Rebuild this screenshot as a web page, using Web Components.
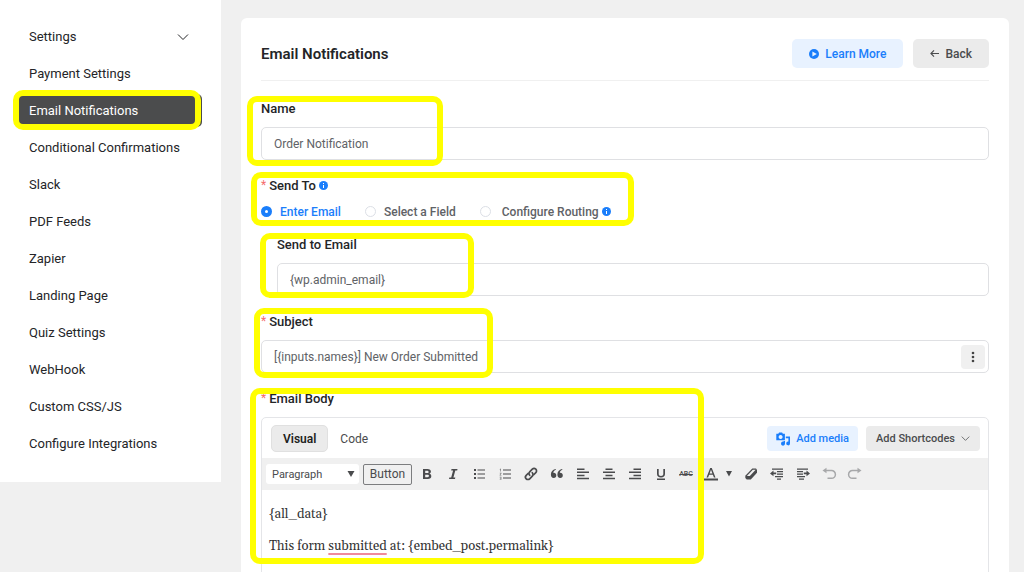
<!DOCTYPE html>
<html lang="en">
<head>
<meta charset="utf-8">
<meta name="viewport" content="width=device-width, initial-scale=1">
<title>Email Notifications</title>
<style>
    body {
        margin: 0;
        background-color: #f0f0f0;
        color: #242528;
        font-family: Roboto, "Liberation Sans", sans-serif;
        font-size: 12px;
    }
</style>
</head>
<body>
<settings-page>
    <side-nav slot="nav">
        <nav-item arrow>Settings</nav-item>
        <nav-item>Payment Settings</nav-item>
        <nav-item active>Email Notifications
            <highlight-ring slot="ring" style="top: -4px; left: -5px; width: 188px; height: 40px"></highlight-ring>
        </nav-item>
        <nav-item>Conditional Confirmations</nav-item>
        <nav-item>Slack</nav-item>
        <nav-item>PDF Feeds</nav-item>
        <nav-item>Zapier</nav-item>
        <nav-item>Landing Page</nav-item>
        <nav-item>Quiz Settings</nav-item>
        <nav-item>WebHook</nav-item>
        <nav-item>Custom CSS/JS</nav-item>
        <nav-item>Configure Integrations</nav-item>
    </side-nav>

    <panel-header>
        Email Notifications
        <action-button slot="actions" kind="primary" icon="play">Learn More</action-button>
        <action-button slot="actions" icon="back">Back</action-button>
    </panel-header>

    <text-field label="Name" value="Order Notification">
        <highlight-ring style="top: -3px; left: -14px; width: 196px; height: 70px"></highlight-ring>
    </text-field>
    <send-to-field>
        <highlight-ring style="top: -4px; left: -10px; width: 383px; height: 54px"></highlight-ring>
    </send-to-field>
    <text-field label="Send to Email" value="{wp.admin_email}" indent>
        <highlight-ring style="top: -2px; left: -17px; width: 214px; height: 65px"></highlight-ring>
    </text-field>
    <text-field label="Subject" value="[{inputs.names}] New Order Submitted" required menu>
        <highlight-ring style="top: -4px; left: -7px; width: 239px; height: 70px"></highlight-ring>
    </text-field>
    <body-editor>
        <p>{all_data}</p>
        <p>This form <u>submitted</u> at: {embed_post.permalink}</p>
        <highlight-ring slot="ring" style="top: -1px; left: -11px; width: 454px; height: 176px"></highlight-ring>
    </body-editor>
</settings-page>

<script>
const icons = {
    chevron: '<svg width="12" height="12" viewBox="0 0 12 12" fill="none" stroke="currentColor" stroke-width="1"><path d="M1 3.500l5 5 5-5"/></svg>',
    play: '<svg width="10" height="10" viewBox="0 0 10 10"><circle cx="5" cy="5" r="5" fill="currentColor"/><path d="M3.400 2.400v5.200L7.800 5z" fill="#e8f2ff"/></svg>',
    back: '<svg width="9" height="9" viewBox="0 0 9 9" fill="none" stroke="currentColor" stroke-width="1.100"><path d="M9 4.500H1M4 1.300L.9 4.500 4 7.700"/></svg>',
    info: '<svg width="9" height="9" viewBox="0 0 9 9"><circle cx="4.500" cy="4.500" r="4.500" fill="#1a7efb"/><path d="M4 3.900h1v3H4zM4 2h1v1H4z" fill="#fff"/></svg>',
    dots: '<svg width="4" height="12" viewBox="0 0 4 12" fill="#444"><circle cx="2" cy="2" r="1.300"/><circle cx="2" cy="6" r="1.300"/><circle cx="2" cy="10" r="1.300"/></svg>',
    media: '<svg width="14" height="14" viewBox="0 0 14 14" fill="currentColor"><path fill-rule="evenodd" d="M.3 1.800h2L3.100.5h3l.8 1.300h2v6.400H.3zM4.600 3a2 2 0 1 0 .01 0z"/><path d="M9.800 4.500H14v7a1.900 1.900 0 1 1-1.600-1.900V6.300H9.800z"/><path d="M7.500 9H9v2.500a2 2 0 1 1-1.500-1.800z"/></svg>'
};

// toolbar glyphs are drawn on a 16px grid
const glyph = (inner) => `<svg width="16" height="16" viewBox="0 0 16 16" fill="currentColor">${inner}</svg>`;
const tools = [
    ['Bold', glyph('<path fill-rule="evenodd" d="M4 3h4.500c2.200 0 3.400 1 3.400 2.600 0 1-.5 1.800-1.500 2.200 1.200.3 1.900 1.200 1.900 2.400C12.300 12 11 13 8.800 13H4zM6.200 4.700v2.400h1.900c1 0 1.500-.4 1.500-1.200S9.100 4.700 8 4.700zM6.200 8.800v2.500h2.200c1 0 1.600-.4 1.600-1.200 0-.9-.6-1.300-1.700-1.300z"/>')],
    ['Italic', glyph('<path d="M6.500 3h6l-.3 1.400h-1.900L8.400 11.600h1.900L10 13H4l.3-1.400h1.900l1.900-7.200H6.200z"/>')],
    ['Bulleted list', glyph('<path d="M3 3h2v2H3zM3 7h2v2H3zM3 11h2v2H3zM6.500 3.500H14v1H6.500zM6.500 7.500H14v1H6.500zM6.500 11.500H14v1H6.500z"/>')],
    ['Numbered list', glyph('<path d="M2.500 3.200L4 2.500V5.500H3.300V3.700zM2.800 6.800h1.600v1L3.400 9h1v.6H2.600V9l1.100-1.400h-.9zM2.700 10.800h1.700v3H2.700v-.6h1v-.6h-.8v-.6h.8v-.6h-1z" opacity=".7"/><path d="M6 3.500h8v1H6zM6 7.500h8v1H6zM6 11.500h8v1H6z"/>')],
    ['Insert link', glyph('<g fill="none" stroke="currentColor" stroke-width="1.700" stroke-linecap="round"><path d="M6.700 9.300a2.600 2.600 0 0 1 0-3.500l2.600-2.600a2.450 2.450 0 0 1 3.500 3.500L11 8.500"/><path d="M9.300 6.700a2.600 2.600 0 0 1 0 3.500l-2.600 2.600a2.450 2.450 0 0 1-3.500-3.500L5 7.500"/></g>')],
    ['Blockquote', glyph('<path d="M7 3.700C5.300 4.300 4.400 5.300 4.300 6.700 6 6.400 7.300 7.600 7.300 9.300A2.700 2.700 0 0 1 4.700 12C2.900 12 1.900 10.600 1.900 8.500 1.900 5.600 3.600 3.600 6.500 3zM13.500 3.700c-1.700.6-2.600 1.600-2.700 3 1.700-.3 3 .9 3 2.600a2.700 2.700 0 0 1-2.600 2.700c-1.800 0-2.800-1.400-2.800-3.500 0-2.900 1.700-4.900 4.600-5.500z"/>')],
    ['Align left', glyph('<path d="M2 2.500h7.500V4H2zM2 5.600h12v1.500H2zM2 8.700h7.500v1.500H2zM2 11.800h12v1.500H2z"/>')],
    ['Align center', glyph('<path d="M4.500 2.500h7V4h-7zM2 5.600h12v1.500H2zM4.500 8.700h7v1.500h-7zM2 11.800h12v1.500H2z"/>')],
    ['Align right', glyph('<path d="M6.500 2.500H14V4H6.500zM2 5.600h12v1.500H2zM6.500 8.700H14v1.500H6.500zM2 11.800h12v1.500H2z"/>')],
    ['Underline', glyph('<path d="M4 3h1.700v5c0 1.300.8 2 2.300 2s2.300-.7 2.300-2V3H12v5c0 2.200-1.500 3.400-4 3.400S4 10.200 4 8zM4 12.500h8V14H4z"/>')],
    ['Strikethrough', '<s>ABC</s>', 'narrow'],
    ['Text color', glyph('<path fill-rule="evenodd" d="M7.200 2h1.600l3.700 9.500h-1.600l-1-2.700H6.100l-1 2.700H3.500zM8 3.800L6.600 7.500h2.800z"/><path d="M1 12.500h14v2H1z"/>')],
    ['Text color options', '<svg width="8" height="6" viewBox="0 0 8 6" fill="currentColor"><path d="M1 0h6L4 5.500z"/></svg>', 'caret'],
    ['Clear formatting', glyph('<path d="M9.300 2.500H13l1 1.300v3L7.800 13.500H3.700L2.300 12V9.700z"/><path d="M9.800 3.700h2.900L6.800 10H3.900z" fill="#f0f0f0"/>')],
    ['Decrease indent', glyph('<path d="M3 2.500h11v1.300H3zM8 5h6v1.300H8zM8 7.500h6v1.300H8zM6 10h8v1.300H6zM8 12.500h4v1.300H8zM1 7.400L4.500 4.500v2h2.700v1.700H4.500v2z"/>')],
    ['Increase indent', glyph('<path d="M2 2.500h11v1.300H2zM2 5h6v1.300H2zM2 7.500h6v1.300H2zM2 10h8v1.300H2zM4 12.500h5v1.300H4zM15 7.400l-3.500-2.900v2H8.800v1.700h2.700v2z"/>')],
    ['Undo', glyph('<path d="M5.500 1.800v5.400L1.500 4.500z"/><path d="M5 4.500h5.500a3.900 3.900 0 0 1 0 7.800H6.500" fill="none" stroke="currentColor" stroke-width="1.500"/>'), 'off'],
    ['Redo', glyph('<path d="M10.500 1.800v5.400l4-2.700z"/><path d="M11 4.500H5.500a3.900 3.900 0 0 0 0 7.800h4" fill="none" stroke="currentColor" stroke-width="1.500"/>'), 'off']
];

// label row shared by every form field
const fieldStyles = `
    * { box-sizing: border-box; }
    :host {
        display: block;
        position: relative;
        margin-bottom: 16px;
    }
    .label {
        display: flex;
        align-items: center;
        gap: 3px;
        height: 18px;
        margin-bottom: 10px;
        font-size: 13px;
        font-weight: 500;
    }
    .star {
        color: #f56c6c;
        font-size: 12px;
        font-weight: 400;
    }
`;

class SettingsPage extends HTMLElement {
    constructor() {
        super();
        this.attachShadow({ mode: 'open' }).innerHTML = `
            <style>
                :host {
                    display: flex;
                    align-items: flex-start;
                    gap: 20px;
                    height: 100vh;
                    overflow: hidden;
                    padding-right: 15px;
                }
                main {
                    flex: 1;
                    min-width: 0;
                    min-height: 100vh;
                    margin-top: 18px;
                    padding: 21px 20px;
                    box-sizing: border-box;
                    background-color: white;
                    border-radius: 6px;
                }
            </style>
            <slot name="nav"></slot>
            <main><slot></slot></main>
        `;
    }
}
customElements.define('settings-page', SettingsPage);

class SideNav extends HTMLElement {
    constructor() {
        super();
        this.attachShadow({ mode: 'open' }).innerHTML = `
            <style>
                :host {
                    display: block;
                    flex: 0 0 221px;
                    background-color: white;
                }
                nav {
                    display: flex;
                    flex-direction: column;
                    gap: 4px;
                    padding: 20px 19px 22px 18px;
                }
            </style>
            <nav aria-label="Form settings"><slot></slot></nav>
        `;
    }
}
customElements.define('side-nav', SideNav);

class NavItem extends HTMLElement {
    constructor() {
        super();
        this.attachShadow({ mode: 'open' }).innerHTML = `
            <style>
                :host {
                    display: block;
                    position: relative;
                }
                a {
                    display: flex;
                    align-items: center;
                    justify-content: space-between;
                    height: 33px;
                    padding: 0 13px 0 11px;
                    border-radius: 5px;
                    color: inherit;
                    font-size: 13px;
                    text-decoration: none;
                    white-space: nowrap;
                }
                :host([active]) a {
                    background-color: #4b4c4d;
                    color: white;
                }
            </style>
            <a href="#"><span><slot></slot></span>${this.hasAttribute('arrow') ? icons.chevron : ''}</a>
            <slot name="ring"></slot>
        `;
    }
}
customElements.define('nav-item', NavItem);

class PanelHeader extends HTMLElement {
    constructor() {
        super();
        this.attachShadow({ mode: 'open' }).innerHTML = `
            <style>
                :host {
                    display: flex;
                    align-items: center;
                    justify-content: space-between;
                    padding-bottom: 12px;
                    margin-bottom: 18px;
                    border-bottom: 1px solid #f0f0f0;
                }
                h1 {
                    margin: 0;
                    font-size: 15px;
                    font-weight: 600;
                }
                div {
                    display: flex;
                    gap: 10px;
                }
            </style>
            <h1><slot></slot></h1>
            <div><slot name="actions"></slot></div>
        `;
    }
}
customElements.define('panel-header', PanelHeader);

class ActionButton extends HTMLElement {
    constructor() {
        super();
        this.attachShadow({ mode: 'open' }).innerHTML = `
            <style>
                :host { display: block; }
                button {
                    display: flex;
                    align-items: center;
                    gap: 6px;
                    height: 29px;
                    padding: 0 17px;
                    border: 0;
                    border-radius: 5px;
                    background-color: #ebebeb;
                    color: #4a4b4d;
                    font: 500 12px Roboto, sans-serif;
                }
                :host([kind="primary"]) button {
                    background-color: #e8f2ff;
                    color: #1a7efb;
                }
            </style>
            <button type="button">${icons[this.getAttribute('icon')]}<slot></slot></button>
        `;
    }
}
customElements.define('action-button', ActionButton);

class TextField extends HTMLElement {
    constructor() {
        super();
        const star = this.hasAttribute('required') ? '<span class="star">*</span>' : '';
        const menu = this.hasAttribute('menu')
            ? `<button type="button" aria-label="Insert shortcode">${icons.dots}</button>` : '';
        this.attachShadow({ mode: 'open' }).innerHTML = `
            <style>
                ${fieldStyles}
                :host([indent]) { margin-left: 16px; }
                .box {
                    display: flex;
                    align-items: center;
                    height: 33px;
                    padding-right: 3px;
                    border: 1px solid #dfe0e3;
                    border-radius: 5px;
                }
                input {
                    flex: 1;
                    min-width: 0;
                    height: 100%;
                    padding: 0 12px;
                    border: 0;
                    outline: 0;
                    background: none;
                    color: #606266;
                    font: 400 12px Roboto, sans-serif;
                }
                button {
                    display: grid;
                    place-items: center;
                    width: 24px;
                    height: 24px;
                    padding: 0;
                    border: 0;
                    border-radius: 4px;
                    background-color: #f0f0f0;
                }
            </style>
            <label class="label" for="field">${star}${this.getAttribute('label')}</label>
            <div class="box"><input id="field" type="text">${menu}</div>
            <slot></slot>
        `;
        this.shadowRoot.querySelector('input').value = this.getAttribute('value');
    }
}
customElements.define('text-field', TextField);

class SendToField extends HTMLElement {
    constructor() {
        super();
        this.attachShadow({ mode: 'open' }).innerHTML = `
            <style>
                ${fieldStyles}
                .choices {
                    display: flex;
                    gap: 24px;
                    color: #606266;
                    font-weight: 500;
                }
                .choices label {
                    display: flex;
                    align-items: center;
                    gap: 8px;
                    height: 15px;
                    white-space: nowrap;
                }
                .choices label:last-child { gap: 11px; }
                .text {
                    display: flex;
                    align-items: center;
                    gap: 3px;
                }
                input {
                    appearance: none;
                    width: 11px;
                    height: 11px;
                    margin: 0;
                    border: 1px solid #dcdfe6;
                    border-radius: 50%;
                    background-color: white;
                }
                input:checked { border: 4px solid #1a7efb; }
                input:checked + .text { color: #1a7efb; }
            </style>
            <div class="label" id="title"><span class="star">*</span>Send To ${icons.info}</div>
            <div class="choices" role="radiogroup" aria-labelledby="title">
                <label><input type="radio" name="to" checked><span class="text">Enter Email</span></label>
                <label><input type="radio" name="to"><span class="text">Select a Field</span></label>
                <label><input type="radio" name="to"><span class="text">Configure Routing ${icons.info}</span></label>
            </div>
            <slot></slot>
        `;
    }
}
customElements.define('send-to-field', SendToField);

class BodyEditor extends HTMLElement {
    constructor() {
        super();
        const buttons = tools.map(([name, icon, cls]) =>
            `<button type="button" class="tool ${cls || ''}" aria-label="${name}">${icon}</button>`).join('');
        this.attachShadow({ mode: 'open' }).innerHTML = `
            <style>
                ${fieldStyles}
                button {
                    display: flex;
                    align-items: center;
                    justify-content: center;
                    padding: 0;
                    border: 0;
                    background: none;
                    color: #4a4b4d;
                    font: 500 12px Roboto, sans-serif;
                    white-space: nowrap;
                }
                .editor {
                    border: 1px solid #e4e5e8;
                    border-radius: 5px;
                }
                .top {
                    display: flex;
                    align-items: center;
                    gap: 8px;
                    padding: 7px 8px 6px 9px;
                }
                .tab {
                    height: 27px;
                    padding: 0 11px;
                    border: 1px solid transparent;
                    border-radius: 5px;
                    font-weight: 400;
                }
                .tab.on {
                    border-color: #e0e0e0;
                    background-color: #ebebeb;
                    color: #1e1f21;
                    font-weight: 600;
                }
                .tab + .tab { padding: 0 3px; }
                .space { flex: 1; }
                .media, .codes {
                    gap: 6px;
                    height: 25px;
                    border-radius: 4px;
                    font-size: 11px;
                }
                .media {
                    padding: 0 9px;
                    background-color: #e8f2ff;
                    color: #1a7efb;
                }
                .codes {
                    padding: 0 10px;
                    background-color: #ebebeb;
                }
                .codes svg {
                    width: 9px;
                    height: 9px;
                }
                .tools {
                    display: flex;
                    align-items: center;
                    gap: 4px;
                    height: 32px;
                    padding: 0 4px;
                    background-color: #f0f0f0;
                    overflow: hidden;
                }
                .format {
                    display: flex;
                    align-items: center;
                    flex: 0 0 93px;
                    height: 20px;
                    padding-right: 4px;
                    box-sizing: border-box;
                    border-radius: 3px;
                    background-color: white;
                }
                select {
                    appearance: none;
                    flex: 1;
                    min-width: 0;
                    padding: 0 6px;
                    border: 0;
                    background: none;
                    color: #4a4b4d;
                    font: 400 11px Roboto, sans-serif;
                }
                .plain {
                    flex: 0 0 49px;
                    height: 21px;
                    border: 1px solid #7c7d7f;
                    border-radius: 2px;
                    font-weight: 400;
                }
                .tool {
                    flex: 0 0 22px;
                    height: 22px;
                }
                .tool.narrow { flex-basis: 20px; }
                .tool.caret {
                    flex-basis: 14px;
                    margin-left: -4px;
                }
                .tool.off { color: #a7a8aa; }
                .tool s {
                    font-size: 7px;
                    font-weight: 500;
                }
                .content {
                    min-height: 160px;
                    padding: 15px 7px;
                    outline: 0;
                    color: #333;
                    font: 400 13px/18px Gelasio, Georgia, "Liberation Serif", serif;
                }
                ::slotted(p) { margin: 0 0 14px; }
            </style>
            <div class="label" id="title"><span class="star">*</span>Email Body</div>
            <div class="editor">
                <div class="top">
                    <button type="button" class="tab on">Visual</button>
                    <button type="button" class="tab">Code</button>
                    <span class="space"></span>
                    <button type="button" class="media">${icons.media}Add media</button>
                    <button type="button" class="codes">Add Shortcodes ${icons.chevron}</button>
                </div>
                <div class="tools" role="toolbar">
                    <span class="format">
                        <select aria-label="Text format"><option>Paragraph</option></select>
                        <svg width="8" height="6" viewBox="0 0 8 6" fill="#4a4b4d"><path d="M.5 0h7L4 6z"/></svg>
                    </span>
                    <button type="button" class="plain">Button</button>
                    ${buttons}
                </div>
                <div class="content" role="textbox" aria-multiline="true" aria-labelledby="title" contenteditable="true" spellcheck="false"><slot></slot></div>
            </div>
            <slot name="ring"></slot>
        `;
        // spelling mark under flagged words
        this.querySelectorAll('u').forEach((word) => {
            word.style.textDecoration = 'underline 2px #f08a9b';
            word.style.textUnderlineOffset = '3px';
        });
    }
}
customElements.define('body-editor', BodyEditor);

class HighlightRing extends HTMLElement {
    constructor() {
        super();
        this.attachShadow({ mode: 'open' }).innerHTML = `
            <style>
                :host {
                    position: absolute;
                    box-sizing: border-box;
                    border: 6px solid #ffff00;
                    border-radius: 10px;
                    pointer-events: none;
                }
            </style>
        `;
    }
}
customElements.define('highlight-ring', HighlightRing);
</script>
</body>
</html>
